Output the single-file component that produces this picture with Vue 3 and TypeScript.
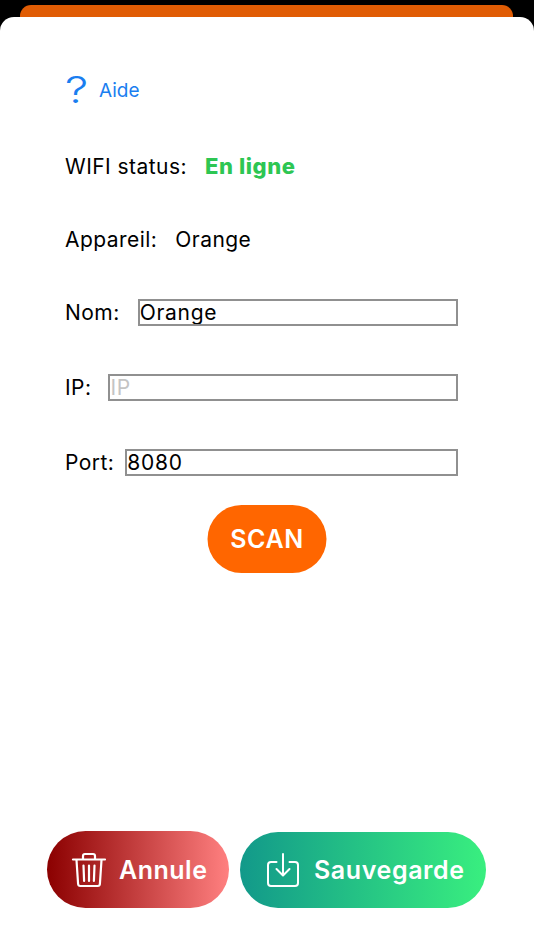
<script setup lang="ts">
import { ref } from 'vue'
const nom = ref('Orange')
const ip = ref('')
const port = ref('8080')
</script>

<template>
  <div class="screen">
    <div class="peek"></div>
    <main class="sheet">
      <section class="form">
        <a class="help">
          <span class="help-mark">?</span>
          <span class="help-text">Aide</span>
        </a>
        <div class="row status-row">
          <span class="label">WIFI status:</span>
          <span class="online">En ligne</span>
        </div>
        <div class="row device-row">
          <span class="label">Appareil:</span>
          <span class="label">Orange</span>
        </div>
        <label class="row field-row nom">
          <span class="label">Nom:</span>
          <input v-model="nom" class="input" type="text" />
        </label>
        <label class="row field-row ip">
          <span class="label">IP:</span>
          <input v-model="ip" class="input" type="text" placeholder="IP" />
        </label>
        <label class="row field-row port">
          <span class="label">Port:</span>
          <input v-model="port" class="input" type="text" />
        </label>
        <button class="scan" type="button">SCAN</button>
      </section>

      <footer class="actions">
        <button class="action cancel" type="button">
          <svg class="icon trash" viewBox="0 0 36 36" fill="none" stroke="#fff" stroke-width="2.200" stroke-linecap="round" stroke-linejoin="round">
            <path d="M2 7.500h32" />
            <path d="M12 7V4a2 2 0 0 1 2-2h8a2 2 0 0 1 2 2v3" />
            <path d="M5.500 8l1.600 24a2.200 2.200 0 0 0 2.200 2h17.400a2.200 2.200 0 0 0 2.200-2l1.600-24" />
            <path d="M12.500 13.500l.6 15.500M18 13.500v15.500M23.500 13.500l-.6 15.500" />
          </svg>
          <span>Annule</span>
        </button>
        <button class="action save" type="button">
          <svg class="icon save-icon" viewBox="0 0 32 34" fill="none" stroke="#fff" stroke-width="2" stroke-linecap="round" stroke-linejoin="round">
            <path d="M9.500 9H4a3 3 0 0 0-3 3v18a3 3 0 0 0 3 3h24a3 3 0 0 0 3-3V12a3 3 0 0 0-3-3h-5.500" />
            <path d="M16 1v21" />
            <path d="M9.500 16l6.500 6.500 6.500-6.500" />
          </svg>
          <span>Sauvegarde</span>
        </button>
      </footer>
    </main>
  </div>
</template>

<style>
html, body { margin: 0; background: #000; }
</style>

<style scoped>
.screen {
  width: 534px;
  height: 950px;
  padding-top: 5px;
  box-sizing: border-box;
  display: flex;
  flex-direction: column;
  background: #000;
  font-family: Inter, "Liberation Sans", sans-serif;
  color: #000;
  overflow: hidden;
}
.peek {
  flex: none;
  height: 12px;
  margin: 0 21px 0 20px;
  background: #e05c04;
  border-radius: 11px 11px 0 0;
}
.sheet {
  flex: 1;
  display: flex;
  flex-direction: column;
  justify-content: space-between;
  background: #fff;
  border-radius: 14px 14px 0 0;
  padding: 60px 0 42px;
}
.form {
  display: flex;
  flex-direction: column;
  padding: 0 76px 0 65px;
}
.help {
  display: flex;
  align-items: center;
  height: 26px;
  color: #1a7ef0;
}
.help-mark {
  display: inline-block;
  width: 34px;
  font-size: 37px;
  font-weight: 300;
  line-height: 26px;
  transform: scaleX(1.25);
  transform-origin: left center;
}
.help-text {
  font-size: 19px;
}
.row {
  display: flex;
  align-items: center;
  font-size: 21px;
  font-weight: 400;
  letter-spacing: 0.45px;
}
.label {
  white-space: nowrap;
}
.status-row {
  height: 28px;
  margin-top: 49px;
  gap: 18px;
}
.online {
  color: #2dc653;
  font-size: 22px;
  font-weight: 800;
  letter-spacing: 0.6px;
}
.device-row {
  height: 28px;
  margin-top: 45px;
  gap: 18px;
}
.field-row {
  height: 27px;
}
.nom { margin-top: 46px; gap: 18px; }
.ip { margin-top: 48px; gap: 17px; }
.port { margin-top: 48px; gap: 11px; }
.input {
  flex: 1;
  min-width: 0;
  height: 27px;
  box-sizing: border-box;
  padding: 0;
  border: 2px solid #909090;
  border-radius: 0;
  outline: none;
  background: #fff;
  color: #000;
  font: inherit;
  letter-spacing: 0.7px;
}
.input::placeholder {
  color: #c4c4c4;
  opacity: 1;
}
.scan {
  align-self: center;
  width: 119px;
  height: 68px;
  margin: 29px 0 0 0;
  border: none;
  border-radius: 34px;
  background: #ff6600;
  color: #fff;
  font: 600 25px Inter, "Liberation Sans", sans-serif;
  letter-spacing: 0.6px;
  transform: translateX(5.500px);
}
.actions {
  display: flex;
  align-items: flex-end;
  gap: 11px;
  padding-left: 47px;
}
.action {
  display: flex;
  align-items: center;
  border: none;
  padding: 0;
  color: #fff;
  font: 600 25px Inter, "Liberation Sans", sans-serif;
}
.cancel {
  width: 182px;
  height: 77px;
  padding-left: 24px;
  gap: 12px;
  border-radius: 39px;
  background: linear-gradient(90deg, #8b0000, #ff8080);
  letter-spacing: 0.5px;
}
.save {
  width: 246px;
  height: 76px;
  padding-left: 27px;
  gap: 15px;
  border-radius: 38px;
  background: linear-gradient(90deg, #12998a, #39ef7f);
  letter-spacing: 0.6px;
}
.icon {
  flex: none;
  display: block;
}
.trash {
  width: 36px;
  height: 36px;
}
.save-icon {
  width: 32px;
  height: 34px;
}
</style>
